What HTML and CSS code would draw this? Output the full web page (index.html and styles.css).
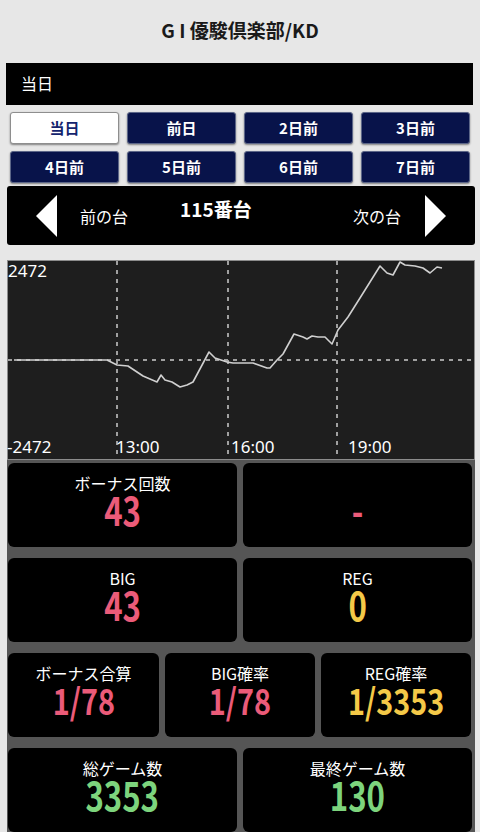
FILE: index.html
```html
<!DOCTYPE html>
<html>
<head>
<meta charset="utf-8">
<link rel="stylesheet" href="styles.css">
</head>
<body>
<div class="title">G I 優駿倶楽部/KD</div>
<div class="day-bar">当日</div>
<div class="day-tabs">
  <a class="tab on">当日</a>
  <a class="tab">前日</a>
  <a class="tab">2日前</a>
  <a class="tab">3日前</a>
  <a class="tab">4日前</a>
  <a class="tab">5日前</a>
  <a class="tab">6日前</a>
  <a class="tab">7日前</a>
</div>
<div class="unit-nav">
  <span class="arrow prev"></span>
  <span class="nav-label first">前の台</span>
  <span class="unit-name">115番台</span>
  <span class="spacer"></span>
  <span class="nav-label">次の台</span>
  <span class="arrow next"></span>
</div>
<div class="graph">
  <svg viewBox="7 260 468 200" width="468" height="200">
    <rect x="7.5" y="260.5" width="467" height="199" fill="#1e1e1e" stroke="#8c8c8c"/>
    <g class="grid">
      <line x1="117" y1="261" x2="117" y2="459"/>
      <line x1="228" y1="261" x2="228" y2="459"/>
      <line x1="337" y1="261" x2="337" y2="459"/>
      <line x1="8" y1="360" x2="474" y2="360"/>
    </g>
    <polyline class="line" points="14,360 107,360 117,365 128,366 143,376 157,382 161,375 165,380 172,382 180,387 187,385 193,382 209,352 215,358 227,362 233,363 253,363 267,368 270,368 277,360 283,354 294,334 303,337 307,339 312,336 318,337 325,337 332,344 338,330 348,317 360,298 380,266 387,273 393,275 400,262 405,265 415,266 423,268 430,273 437,267 442,268"/>
    <g class="axis">
      <text x="8" y="277">2472</text>
      <text x="7" y="453">-2472</text>
      <text x="116" y="453">13:00</text>
      <text x="231" y="453">16:00</text>
      <text x="348" y="453">19:00</text>
    </g>
  </svg>
</div>
<div class="stats">
  <div class="row">
    <div class="card"><div class="label">ボーナス回数</div><div class="value pink"><span>43</span></div></div>
    <div class="card"><div class="label"></div><div class="value pink"><span>-</span></div></div>
  </div>
  <div class="row">
    <div class="card"><div class="label">BIG</div><div class="value pink"><span>43</span></div></div>
    <div class="card"><div class="label">REG</div><div class="value yellow"><span>0</span></div></div>
  </div>
  <div class="row three">
    <div class="card"><div class="label">ボーナス合算</div><div class="value pink"><span>1/78</span></div></div>
    <div class="card"><div class="label">BIG確率</div><div class="value pink"><span>1/78</span></div></div>
    <div class="card"><div class="label">REG確率</div><div class="value yellow"><span>1/3353</span></div></div>
  </div>
  <div class="row">
    <div class="card"><div class="label">総ゲーム数</div><div class="value green"><span>3353</span></div></div>
    <div class="card"><div class="label">最終ゲーム数</div><div class="value green"><span>130</span></div></div>
  </div>
</div>
</body>
</html>
```
FILE: styles.css
```css
html { background: #e7e7e7; }
body
{
  margin: 0;
  font-family: "Noto Sans CJK JP", "Noto Sans", sans-serif;
  color: #fff;
  overflow: hidden;
}

.title
{
  height: 63px;
  line-height: 60px;
  text-align: center;
  font-size: 19px;
  font-weight: bold;
  color: #1a1a1a;
}

.day-bar
{
  margin: 0 7px 0 6px;
  height: 42px;
  line-height: 40px;
  padding-left: 15px;
  background: #000;
  font-size: 16px;
}

.day-tabs
{
  display: grid;
  grid-template-columns: repeat(4, 109px);
  column-gap: 8px;
  row-gap: 7px;
  margin: 7px 0 0 10px;
}
.tab
{
  display: block;
  height: 32px;
  line-height: 30px;
  box-sizing: border-box;
  text-align: center;
  font-size: 15px;
  font-weight: bold;
  color: #fff;
  background: #08134a;
  border: 1px solid #5c6688;
  border-radius: 3px;
  box-shadow: 0 1px 2px rgba(0,0,0,.45);
}
.tab.on
{
  background: #fff;
  color: #14246e;
  border-color: #8e8e8e;
}

.unit-nav
{
  display: flex;
  align-items: center;
  margin: 3px 5px 0 7px;
  height: 59px;
  padding: 0 29px;
  background: #000;
  border-radius: 3px;
  font-size: 16px;
}
.arrow
{
  width: 0;
  height: 0;
  border-top: 21px solid transparent;
  border-bottom: 21px solid transparent;
}
.arrow.prev { border-right: 21px solid #fff; }
.arrow.next { border-left: 21px solid #fff; }
.nav-label { margin-right: 24px; }
.nav-label.first { margin: 0 0 0 23px; }
.unit-name
{
  margin: 0 0 14px 52px;
  font-size: 19px;
  font-weight: bold;
}
.spacer { flex: 1; }

.graph
{
  margin: 15px 0 0 7px;
  height: 200px;
}
.graph svg { display: block; }
.grid line
{
  stroke: #a0a0a0;
  stroke-width: 2;
  stroke-dasharray: 4 5;
}
.line
{
  fill: none;
  stroke: #d0d0d0;
  stroke-width: 1.6;
  stroke-linejoin: round;
}
.axis text
{
  fill: #fff;
  font-size: 17px;
  font-family: "Noto Sans", sans-serif;
}

.stats
{
  margin: 0 5px 0 7px;
  padding: 3px 3px 40px 1px;
  background: #555;
}
.row
{
  display: grid;
  grid-template-columns: 1fr 1fr;
  gap: 6px;
  margin-bottom: 11px;
}
.row.three { grid-template-columns: 151px 150px 150px; }
.card
{
  height: 84px;
  background: #000;
  border-radius: 6px;
  text-align: center;
}
.label
{
  height: 17px;
  padding-top: 12px;
  line-height: 17px;
  font-size: 16px;
}
.value
{
  font-size: 40px;
  line-height: 34px;
  font-weight: bold;
}
.value span
{
  display: inline-block;
  transform: scaleX(0.78);
}
.three .value { font-size: 36px; }
.three .value span { transform: scaleX(0.8); }
.pink { color: #eb5b79; }
.yellow { color: #f4c948; }
.green { color: #7dd47d; }
```
